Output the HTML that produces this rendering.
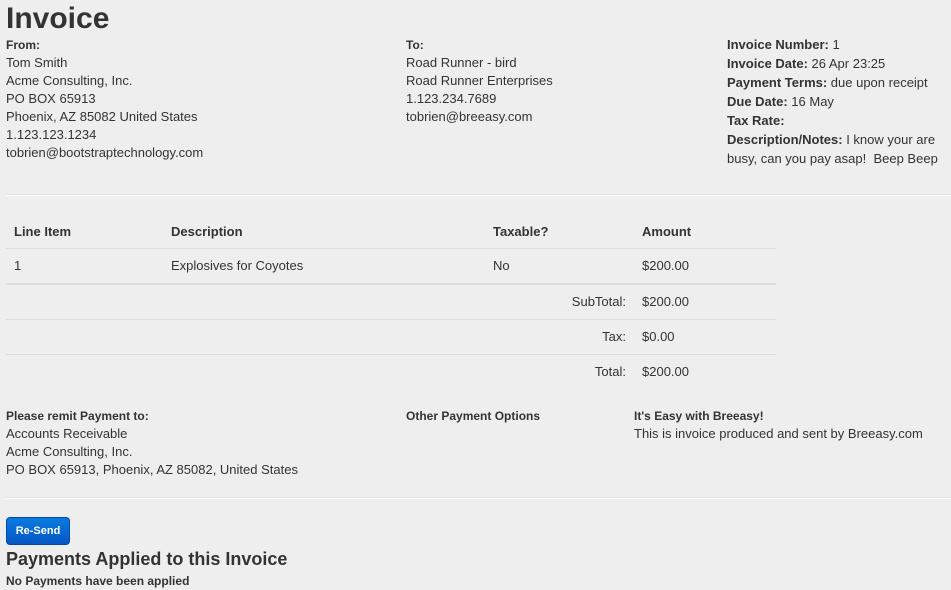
<!DOCTYPE html>
<html><head><meta charset="utf-8"><style>
body{margin:0;background:#eeeeee;font-family:"Liberation Sans",Arial,sans-serif;color:#333;font-size:13px;width:951px;height:589px;overflow:hidden;position:relative}
.a{position:absolute;white-space:nowrap;line-height:18px}
b{font-weight:bold}
.s{font-size:12px}
.hr{position:absolute;left:6px;right:0;height:1px;background:#fff;border-top:1px solid #e2e2e2}
.ln{position:absolute;left:6px;width:770px;height:1px;background:#dcdcdc}
</style></head><body>
<div class="a" style="left:6px;top:1px;font-size:30px;line-height:36px;font-weight:bold">Invoice</div>
<div class="a" style="left:6px;top:36px"><b class="s">From:</b><br>Tom Smith<br>Acme Consulting, Inc.<br>PO BOX 65913<br>Phoenix, AZ 85082 United States<br>1.123.123.1234<br>tobrien@bootstraptechnology.com</div>
<div class="a" style="left:406px;top:36px"><b class="s">To:</b><br>Road Runner - bird<br>Road Runner Enterprises<br>1.123.234.7689<br>tobrien@breeasy.com</div>
<div class="a" style="left:727px;top:35px;line-height:19px"><b>Invoice Number:</b> 1<br><b>Invoice Date:</b> 26 Apr 23:25<br><b>Payment Terms:</b> due upon receipt<br><b>Due Date:</b> 16 May<br><b>Tax Rate:</b><br><b>Description/Notes:</b> I know your are<br>busy, can you pay asap!&nbsp; Beep Beep</div>
<div class="hr" style="top:194px"></div>
<div class="a" style="left:14px;top:223px"><b>Line Item</b></div>
<div class="a" style="left:171px;top:223px"><b>Description</b></div>
<div class="a" style="left:493px;top:223px"><b>Taxable?</b></div>
<div class="a" style="left:642px;top:223px"><b>Amount</b></div>
<div class="ln" style="top:248px"></div>
<div class="a" style="left:14px;top:257px">1</div>
<div class="a" style="left:171px;top:257px">Explosives for Coyotes</div>
<div class="a" style="left:493px;top:257px">No</div>
<div class="a" style="left:642px;top:257px">$200.00</div>
<div class="ln" style="top:283px;height:2px"></div>
<div class="a" style="right:325px;top:293px">SubTotal:</div>
<div class="a" style="left:642px;top:293px">$200.00</div>
<div class="ln" style="top:319px"></div>
<div class="a" style="right:325px;top:328px">Tax:</div>
<div class="a" style="left:642px;top:328px">$0.00</div>
<div class="ln" style="top:354px"></div>
<div class="a" style="right:325px;top:363px">Total:</div>
<div class="a" style="left:642px;top:363px">$200.00</div>
<div class="a" style="left:6px;top:407px"><b class="s">Please remit Payment to:</b><br>Accounts Receivable<br>Acme Consulting, Inc.<br>PO BOX 65913, Phoenix, AZ 85082, United States</div>
<div class="a" style="left:406px;top:407px"><b class="s">Other Payment Options</b></div>
<div class="a" style="left:634px;top:407px"><b class="s">It's Easy with Breeasy!</b><br>This is invoice produced and sent by Breeasy.com</div>
<div class="hr" style="top:497px"></div>
<div class="a" style="left:6px;top:517px;width:64px;height:28px;border-radius:4px;background:linear-gradient(#0a7be0,#0557c4);border:1px solid #0448a8;box-sizing:border-box;color:#fff;font-size:11px;font-weight:bold;line-height:26px;text-align:center">Re-Send</div>
<div class="a" style="left:6px;top:547px;font-size:18px;line-height:24px;font-weight:bold">Payments Applied to this Invoice</div>
<div class="a" style="left:6px;top:572px"><b class="s">No Payments have been applied</b></div>
</body></html>
